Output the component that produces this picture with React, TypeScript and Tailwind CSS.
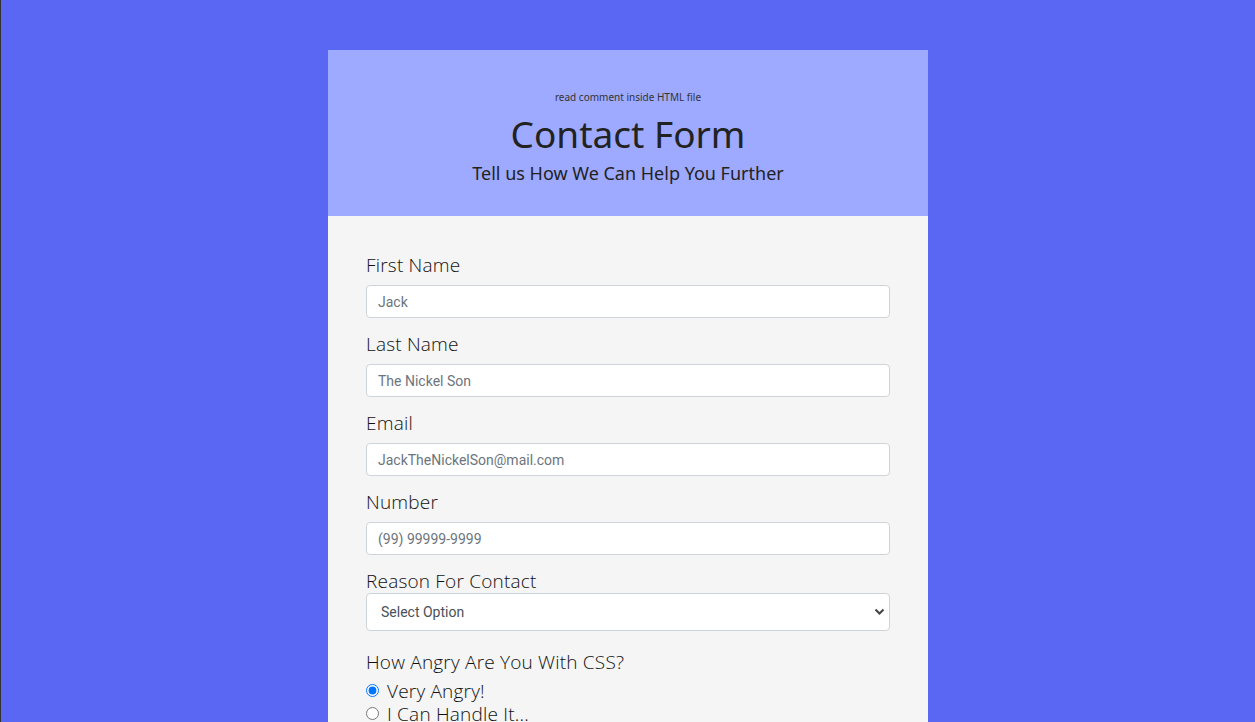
import { useState } from "react";

const fields = [
  { label: "First Name", placeholder: "Jack" },
  { label: "Last Name", placeholder: "The Nickel Son" },
  { label: "Email", placeholder: "JackTheNickelSon@mail.com" },
  { label: "Number", placeholder: "(99) 99999-9999" },
];

const labelCls =
  "block text-[19px] leading-[24px] tracking-[0.2px] font-light text-[#111] font-['Open_Sans',sans-serif]";

const radioRowCls =
  "flex items-center h-[23px] text-[19px] leading-[22px] tracking-[0.2px] font-light text-[#111] font-['Open_Sans',sans-serif]";

export default function App() {
  const [anger, setAnger] = useState("very");

  return (
    <div className="min-h-screen bg-[#5a67f2] border-l border-[#333] pt-[50px]">
      <div className="mx-auto w-[600px]">
        {/* Header */}
        <div className="bg-[#9eaaff] h-[166px] flex flex-col items-center pt-[41px] text-[#222] font-['Noto_Sans',sans-serif]">
          <p className="text-[10px] leading-[12px] text-[#333]">read comment inside HTML file</p>
          <h1 className="mt-[8px] text-[37px] leading-[46px]">Contact Form</h1>
          <p className="mt-[4px] text-[18px] leading-[24px]">Tell us How We Can Help You Further</p>
        </div>

        {/* Form */}
        <form className="bg-[#f5f5f5] px-[38px] pt-[37px] pb-10">
          {fields.map((f) => (
            <div key={f.label} className="mb-[14px]">
              <label className={`${labelCls} mb-[8px]`}>{f.label}</label>
              <input
                type="text"
                placeholder={f.placeholder}
                className="block w-full h-[33px] bg-white border border-[#ced4da] rounded-[4px] px-[11px] text-[14px] font-['Roboto',sans-serif] placeholder:text-[#6c757d] outline-none"
              />
            </div>
          ))}

          <label className={labelCls}>Reason For Contact</label>
          <div className="relative">
            <select className="block w-full h-[38px] bg-white border border-[#ced4da] rounded-[4px] pl-[14px] text-[14px] text-[#495057] font-['Roboto',sans-serif] appearance-none outline-none">
              <option>Select Option</option>
              <option>Question</option>
              <option>Complaint</option>
            </select>
            <svg
              className="absolute right-[5px] top-[14px] pointer-events-none"
              width="11"
              height="9"
              viewBox="0 0 11 9"
            >
              <path d="M1.5 2.5 L5.5 6.5 L9.5 2.5" stroke="#444" strokeWidth="2" fill="none" />
            </svg>
          </div>

          <label className={`${labelCls} mt-[19px]`}>How Angry Are You With CSS?</label>
          <div className="mt-[5px] flex flex-col">
            <label className={radioRowCls}>
              <input
                type="radio"
                name="anger"
                checked={anger === "very"}
                onChange={() => setAnger("very")}
                className="w-[13px] h-[13px] m-0 mr-[8px] accent-[#0075ff]"
              />
              Very Angry!
            </label>
            <label className={radioRowCls}>
              <input
                type="radio"
                name="anger"
                checked={anger === "ok"}
                onChange={() => setAnger("ok")}
                className="w-[13px] h-[13px] m-0 mr-[8px] accent-[#0075ff]"
              />
              I Can Handle It...
            </label>
          </div>
        </form>
      </div>
    </div>
  );
}
